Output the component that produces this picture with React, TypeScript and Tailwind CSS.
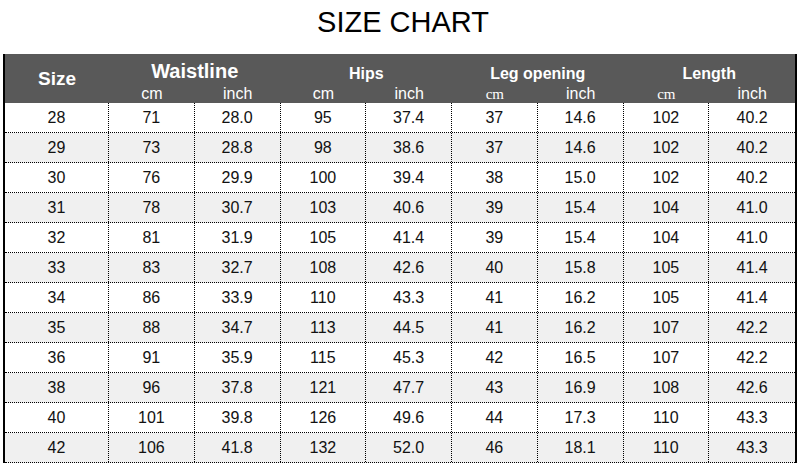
const rows: (string | number)[][] = [
  [28, 71, "28.0", 95, "37.4", 37, "14.6", 102, "40.2"],
  [29, 73, "28.8", 98, "38.6", 37, "14.6", 102, "40.2"],
  [30, 76, "29.9", 100, "39.4", 38, "15.0", 102, "40.2"],
  [31, 78, "30.7", 103, "40.6", 39, "15.4", 104, "41.0"],
  [32, 81, "31.9", 105, "41.4", 39, "15.4", 104, "41.0"],
  [33, 83, "32.7", 108, "42.6", 40, "15.8", 105, "41.4"],
  [34, 86, "33.9", 110, "43.3", 41, "16.2", 105, "41.4"],
  [35, 88, "34.7", 113, "44.5", 41, "16.2", 107, "42.2"],
  [36, 91, "35.9", 115, "45.3", 42, "16.5", 107, "42.2"],
  [38, 96, "37.8", 121, "47.7", 43, "16.9", 108, "42.6"],
  [40, 101, "39.8", 126, "49.6", 44, "17.3", 110, "43.3"],
  [42, 106, "41.8", 132, "52.0", 46, "18.1", 110, "43.3"],
];

const groups = [
  { label: "Waistline", big: true, serifCm: false },
  { label: "Hips", big: false, serifCm: false },
  { label: "Leg opening", big: false, serifCm: true },
  { label: "Length", big: false, serifCm: true },
];

export default function App() {
  return (
    <div className="w-[800px] h-[468px] bg-white overflow-hidden font-['Liberation_Sans',Arial,sans-serif] text-[#111]">
      <h1 className="h-[54px] flex items-center justify-center pl-[6px] pb-[8px] text-[29px] text-black">
        SIZE CHART
      </h1>

      <div className="ml-[3px] w-[794px] border-x-2 border-black">
        {/* header */}
        <div className="grid grid-cols-[104px_repeat(8,1fr)] grid-rows-[30px_19px] bg-[#595959] text-white">
          <div className="row-span-2 flex items-center justify-center pt-[1px] text-[19px] font-bold">
            Size
          </div>
          {groups.map((g) => (
            <div
              key={g.label}
              className={`col-span-2 flex items-end justify-center font-bold leading-none ${
                g.big ? "text-[20px] pb-[3px]" : "text-[16px] pb-[2px]"
              }`}
            >
              {g.label}
            </div>
          ))}
          {groups.map((g) => (
            <div key={g.label + "-sub"} className="contents">
              <div
                className={`flex items-end justify-center leading-none pb-[1px] ${
                  g.serifCm
                    ? "font-['Liberation_Serif','Times_New_Roman',serif] text-[15px]"
                    : "text-[16px]"
                }`}
              >
                cm
              </div>
              <div className="flex items-end justify-center leading-none pb-[1px] text-[16px]">
                inch
              </div>
            </div>
          ))}
        </div>

        {/* body */}
        {rows.map((r, i) => (
          <div
            key={i}
            className={`grid grid-cols-[104px_repeat(8,1fr)] h-[30px] border-b border-dotted border-black ${
              i % 2 === 1 ? "bg-[#f0f0f0]" : "bg-white"
            }`}
          >
            {r.map((v, j) => (
              <div
                key={j}
                className={`flex items-center justify-center text-[16px] ${
                  j < r.length - 1 ? "border-r border-dotted border-black" : ""
                }`}
              >
                {v}
              </div>
            ))}
          </div>
        ))}
      </div>
    </div>
  );
}
